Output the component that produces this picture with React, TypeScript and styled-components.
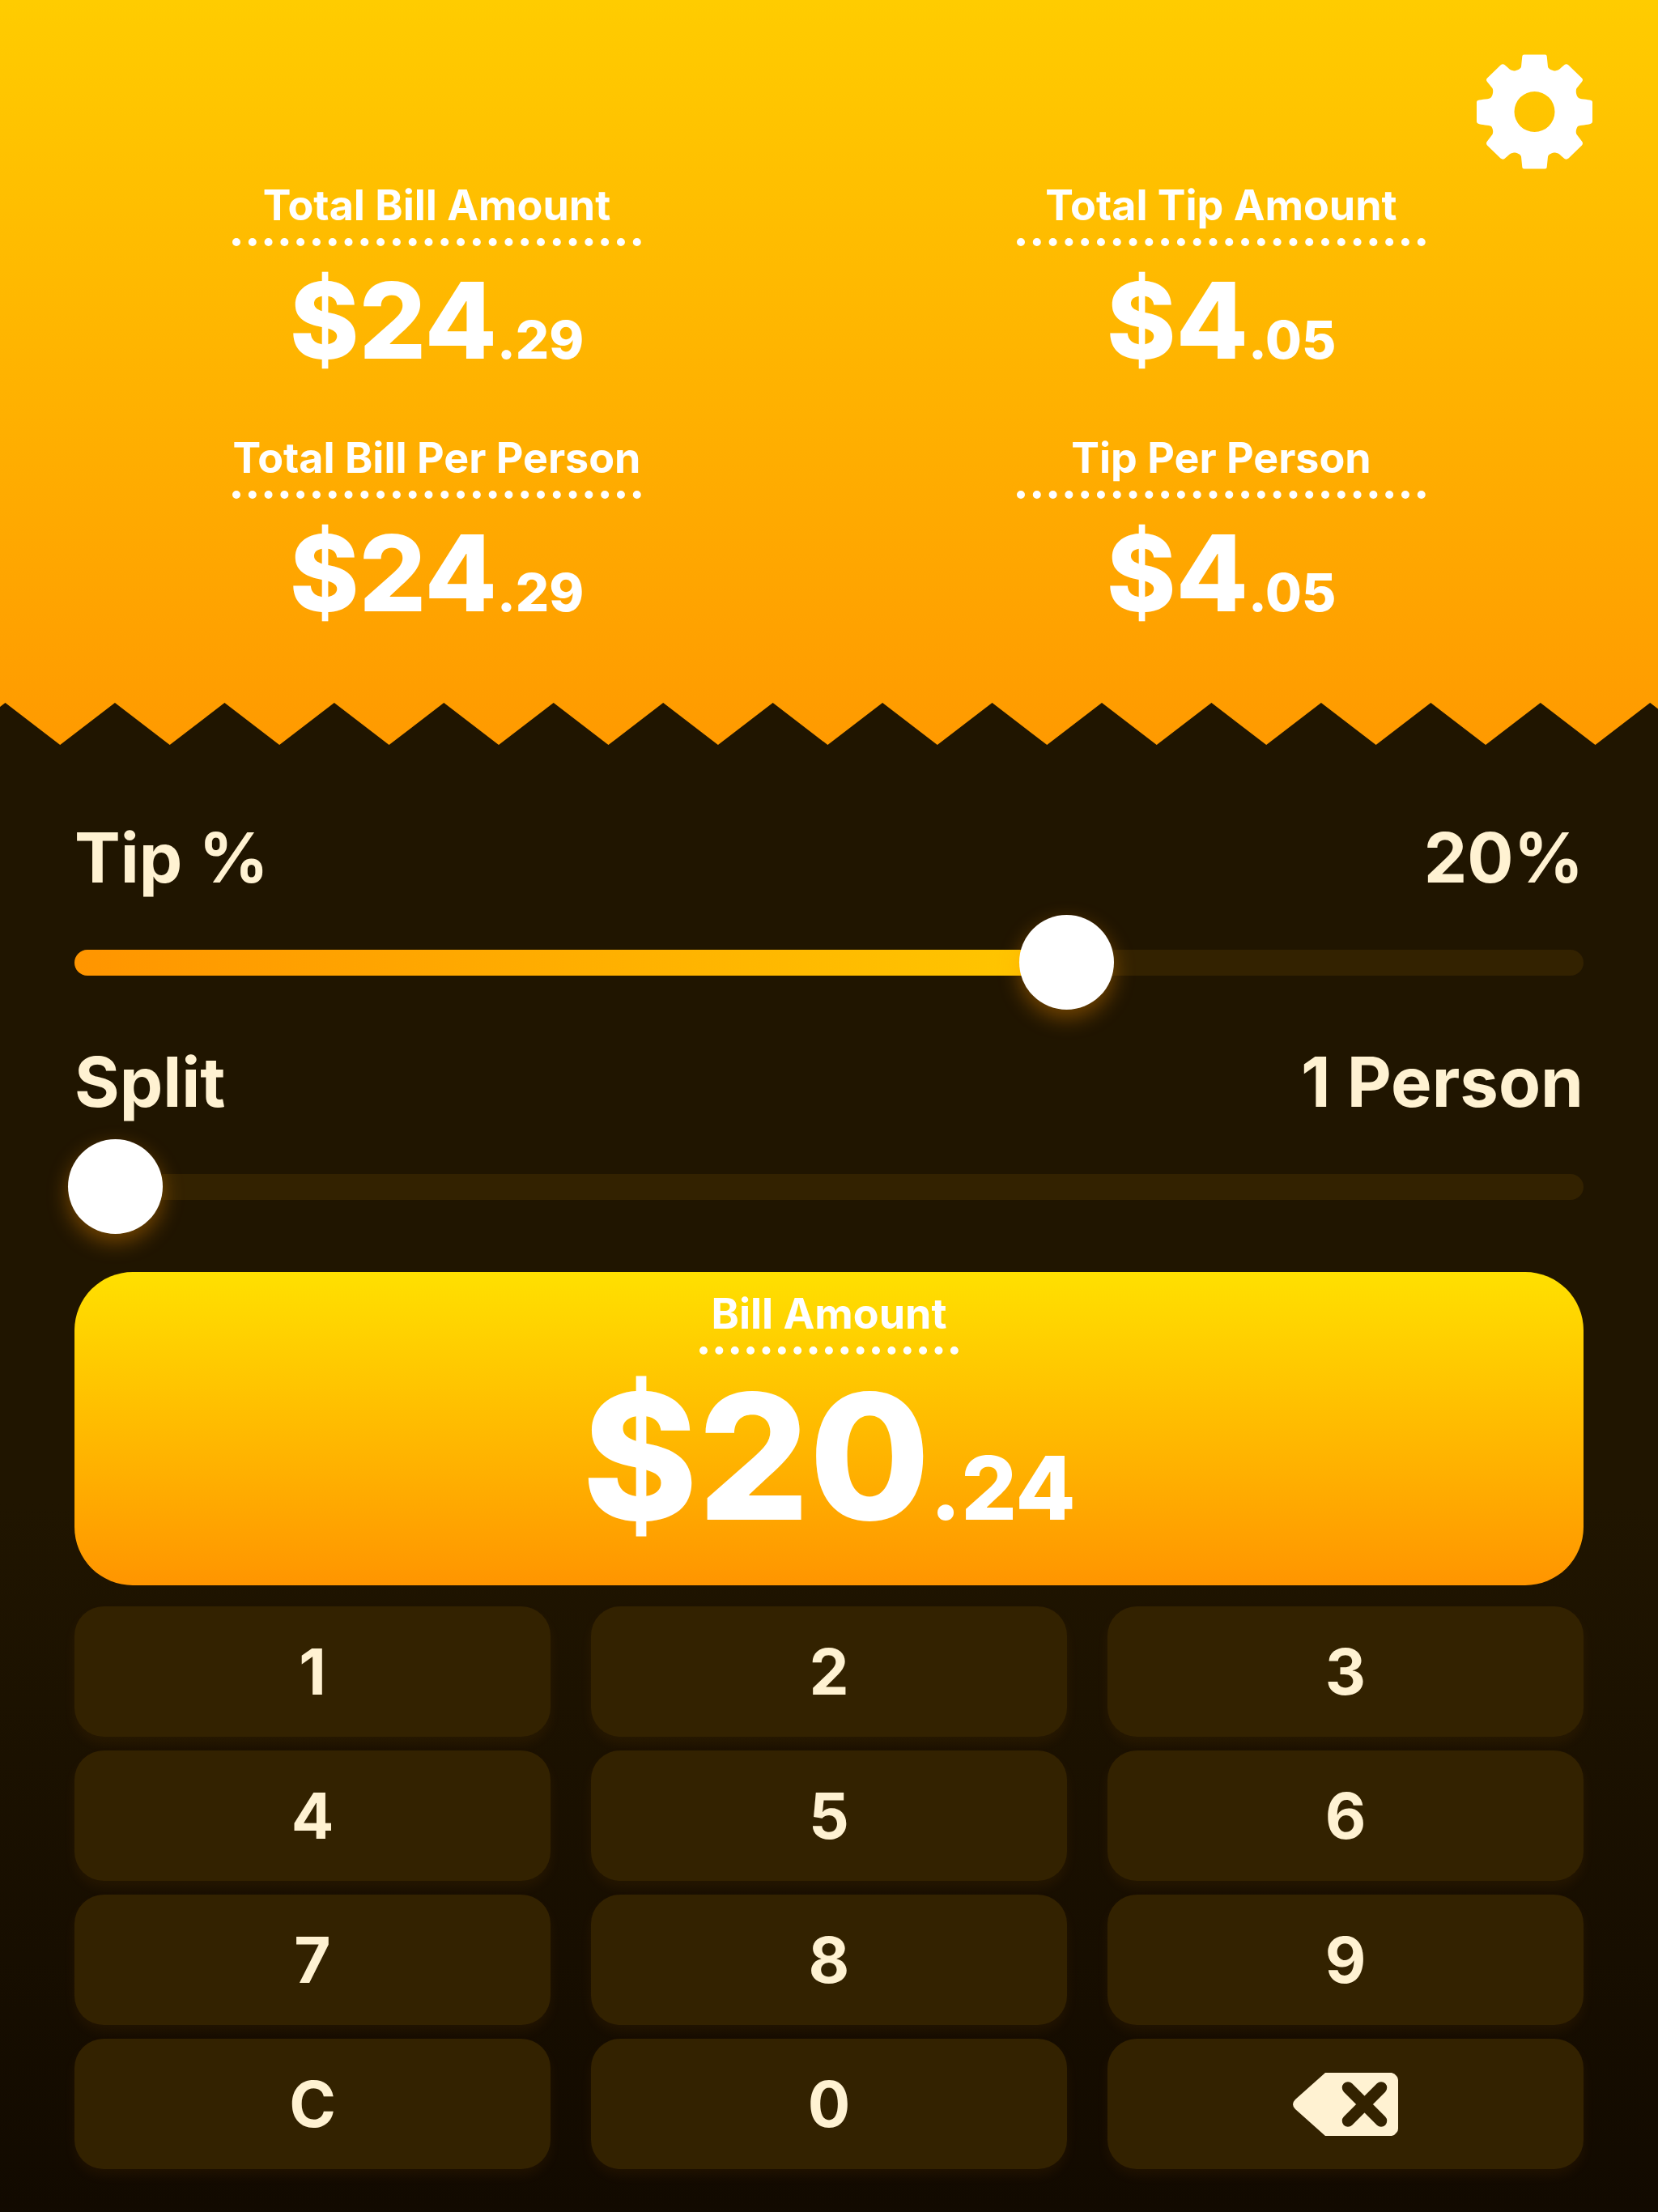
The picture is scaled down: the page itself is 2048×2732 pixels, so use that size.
import React, { useId, useState } from "react";
import styled, { createGlobalStyle } from "styled-components";

const color = {
  ground: "#201500",
  groundEnd: "#120a00",
  surface: "#332200",
  cream: "#fff2d2",
  white: "#ffffff",
};

const GlobalStyle = createGlobalStyle`
  *, *::before, *::after { box-sizing: border-box; }
  body {
    margin: 0;
    background: ${color.groundEnd};
    font-family: Inter, "Liberation Sans", sans-serif;
  }
  button, input { font: inherit; }
`;

const Page = styled.main`
  display: flex;
  flex-direction: column;
  min-height: 100vh;
  color: ${color.cream};
  background: linear-gradient(${color.ground} 68%, ${color.groundEnd} 100%);
`;

const Header = styled.header`
  display: flex;
  flex-direction: column;
  color: ${color.white};
  background: linear-gradient(#ffcc00, #ff9a00);
`;

const Toolbar = styled.div`
  display: flex;
  justify-content: flex-end;
  padding: 67px 81px 0;
`;

const IconButton = styled.button`
  display: flex;
  padding: 0;
  border: 0;
  background: none;
  color: inherit;
  cursor: pointer;
`;

const Totals = styled.section`
  display: grid;
  grid-template-columns: 1fr 1fr;
  row-gap: 48px;
  padding: 15px 55px 68px;
`;

const Figure = styled.div`
  display: flex;
  flex-direction: column;
  align-items: center;
`;

const Caption = styled.h2<{ $wide?: boolean }>`
  display: flex;
  justify-content: center;
  width: ${(p) => (p.$wide ? "505px" : "320px")};
  margin: 0;
  padding-bottom: 10px;
  border-bottom: 10px dotted ${color.white};
  font-size: 52px;
  font-weight: 700;
  line-height: 60px;
  white-space: nowrap;
`;

const Amount = styled.p<{ $large?: boolean }>`
  margin: 0;
  font-size: ${(p) => (p.$large ? "216px" : "130px")};
  line-height: ${(p) => (p.$large ? "252px" : "184px")};
  font-weight: 800;
  white-space: nowrap;
`;

const Cents = styled.span`
  font-size: 50%;
  line-height: 1;
`;

const TornEdge = styled.svg`
  display: block;
  width: 100%;
  height: 52px;
  fill: ${color.ground};
`;

const Controls = styled.section`
  display: flex;
  flex-direction: column;
  gap: 37px;
  padding: 88px 92px 46px;
`;

const Field = styled.div`
  display: flex;
  flex-direction: column;
  gap: 18px;
`;

const FieldHead = styled.div`
  display: flex;
  justify-content: space-between;
  font-size: 85px;
  font-weight: 700;
  line-height: 104px;
  white-space: nowrap;
`;

const Rail = styled.div`
  display: grid;
  align-items: center;
  height: 118px;

  & > * {
    grid-area: 1 / 1;
    min-width: 0;
  }
`;

const Track = styled.div`
  display: flex;
  height: 32px;
  border-radius: 16px;
  background: ${color.surface};
`;

const Fill = styled.div`
  height: 32px;
  border-radius: 16px 0 0 16px;
  background: linear-gradient(90deg, #ff9500, #ffc800);
`;

const Range = styled.input`
  width: calc(100% + 16px);
  height: 118px;
  margin: 0 -8px;
  appearance: none;
  background: none;
  cursor: pointer;

  &::-webkit-slider-runnable-track {
    height: 118px;
    background: none;
  }

  &::-webkit-slider-thumb {
    appearance: none;
    width: 117px;
    height: 117px;
    border: 0;
    border-radius: 50%;
    background: ${color.white};
    box-shadow: 0 10px 26px rgba(255, 149, 0, 0.38);
  }
`;

const BillCard = styled.section`
  display: flex;
  flex-direction: column;
  align-items: center;
  margin: 0 92px;
  padding: 22px 0 33px;
  border-radius: 72px;
  color: ${color.white};
  background: linear-gradient(#ffe000, #ff9500);
`;

const Keypad = styled.section`
  display: grid;
  grid-template-columns: repeat(3, 1fr);
  gap: 17px 50px;
  padding: 26px 92px 53px;
`;

const Key = styled.button`
  display: flex;
  align-items: center;
  justify-content: center;
  height: 161px;
  padding: 0;
  border: 0;
  border-radius: 36px;
  color: ${color.cream};
  background: ${color.surface};
  box-shadow: 0 8px 16px rgba(255, 149, 0, 0.06);
  font-size: 78px;
  font-weight: 700;
  line-height: 96px;
  cursor: pointer;
`;

function Gear() {
  return (
    <svg width="143" height="142" viewBox="-71.500 -71 143 142" fill="currentColor" aria-hidden="true">
      <path
        fillRule="evenodd"
        d="M-13-70.500H13.200Q15-70.500 15.200-68.500L16.500-55.500C17-53 22-50.500 25.500-50.500C31-51 34-56 37-58Q39.500-59.500 42-57.500L58.500-41.500Q60.500-39.500 58.500-37L52-29C50.500-26 51.500-20.500 53.500-18C55-15 66-15.500 70-14Q71.500-13.500 71.500-12V12Q71.500 13.500 70 14.500C66 16.500 56 16.500 53.500 18C51.500 20.500 50.500 25 52 28L58.500 36.500Q60.500 39 58.500 41.500L42 57.500Q39.500 59.500 37 58C34 56 31 51 25.500 50.500C22 50.500 17 52.500 16.500 55.500L15.200 68.500Q15 70.500 13 70.500H-13Q-15 70.500-15.200 68.500L-16.500 55.500C-17 52.500-22 50.500-25.500 50.500C-31 51-34 56-37 58Q-39.500 59.500-42 57.500L-58.500 41.500Q-60.500 39-58.500 36.500L-52 28C-50.500 25-51.500 20.500-53.500 18C-56 16.500-66 16.500-70 14.500Q-71.500 13.500-71.500 12V-12Q-71.500-13.500-70-14C-66-15.500-55-15-53.500-18C-51.500-20.500-50.500-26-52-29L-58.500-37Q-60.500-39.500-58.500-41.500L-42-57.500Q-39.500-59.500-37-58C-34-56-31-51-25.500-50.500C-22-50.500-17-53-16.500-55.500L-15.200-68.500Q-15-70.500-13-70.500ZM0-25A25 25 0 1 0 0 25A25 25 0 1 0 0-25Z"
      />
    </svg>
  );
}

function Backspace() {
  return (
    <svg width="130" height="78" viewBox="0 0 130 78" aria-hidden="true">
      <path
        fill="currentColor"
        d="M40 0H122Q126 1 128 4Q130 6 130 9V69Q130 72 128 74Q126 77 122 78H40L3 45Q-3 39 3 33Z"
      />
      <path
        d="M68 18.500 109 59.500M109 18.500 68 59.500"
        fill="none"
        stroke={color.surface}
        strokeWidth="14.500"
        strokeLinecap="round"
      />
    </svg>
  );
}

const TEETH = 16;
const TOOTH_WIDTH = 135.45;
const FIRST_PEAK = 6.5;

function Zigzag() {
  const start = FIRST_PEAK - TOOTH_WIDTH;
  const points = [`${start},52`];
  for (let i = 0; i <= TEETH; i++) {
    const x = start + i * TOOTH_WIDTH;
    points.push(`${x},0`, `${x + TOOTH_WIDTH / 2},52`);
  }
  return (
    <TornEdge viewBox="0 0 2048 52" preserveAspectRatio="none" aria-hidden="true">
      <polygon points={points.join(" ")} />
    </TornEdge>
  );
}

function Money({ cents, large }: { cents: number; large?: boolean }) {
  const [whole, part] = (cents / 100).toFixed(2).split(".");
  return (
    <Amount $large={large}>
      ${whole}
      <Cents>.{part}</Cents>
    </Amount>
  );
}

function Total({ title, cents }: { title: string; cents: number }) {
  return (
    <Figure>
      <Caption $wide>{title}</Caption>
      <Money cents={cents} />
    </Figure>
  );
}

type SliderProps = {
  label: string;
  text: string;
  min: number;
  max: number;
  value: number;
  onChange: (value: number) => void;
};

function Slider({ label, text, min, max, value, onChange }: SliderProps) {
  const id = useId();
  const share = ((value - min) / (max - min)) * 100;
  return (
    <Field>
      <FieldHead>
        <label htmlFor={id}>{label}</label>
        <output htmlFor={id}>{text}</output>
      </FieldHead>
      <Rail>
        <Track>
          <Fill style={{ width: `${share}%` }} />
        </Track>
        <Range
          id={id}
          type="range"
          min={min}
          max={max}
          value={value}
          onChange={(e) => onChange(Number(e.target.value))}
        />
      </Rail>
    </Field>
  );
}

const KEYS = ["1", "2", "3", "4", "5", "6", "7", "8", "9", "C", "0"];

export default function App() {
  const [tip, setTip] = useState(20);
  const [people, setPeople] = useState(1);
  const [bill, setBill] = useState(2024);

  const tipTotal = Math.round((bill * tip) / 100);
  const total = bill + tipTotal;

  const press = (key: string) =>
    setBill((b) => (key === "C" ? 0 : Math.min(b * 10 + Number(key), 9999999)));

  return (
    <>
      <GlobalStyle />
      <Page>
        <Header>
          <Toolbar>
            <IconButton type="button" aria-label="Settings">
              <Gear />
            </IconButton>
          </Toolbar>
          <Totals>
            <Total title="Total Bill Amount" cents={total} />
            <Total title="Total Tip Amount" cents={tipTotal} />
            <Total title="Total Bill Per Person" cents={total / people} />
            <Total title="Tip Per Person" cents={tipTotal / people} />
          </Totals>
          <Zigzag />
        </Header>
        <Controls>
          <Slider label="Tip %" text={`${tip}%`} min={0} max={30} value={tip} onChange={setTip} />
          <Slider
            label="Split"
            text={people === 1 ? "1 Person" : `${people} People`}
            min={1}
            max={20}
            value={people}
            onChange={setPeople}
          />
        </Controls>
        <BillCard>
          <Caption>Bill Amount</Caption>
          <Money cents={bill} large />
        </BillCard>
        <Keypad>
          {KEYS.map((key) => (
            <Key key={key} type="button" onClick={() => press(key)}>
              {key}
            </Key>
          ))}
          <Key type="button" aria-label="Backspace" onClick={() => setBill((b) => Math.floor(b / 10))}>
            <Backspace />
          </Key>
        </Keypad>
      </Page>
    </>
  );
}
